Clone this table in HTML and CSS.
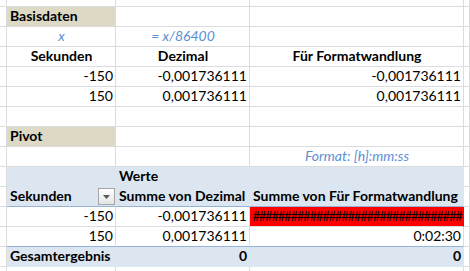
FILE: index.html
```html
<!DOCTYPE html>
<html>
<head>
<meta charset="utf-8">
<link rel="stylesheet" href="styles.css">
</head>
<body>
<div class="sheet">
  <!-- row 0 (partial) -->
  <div class="c"></div><div class="c"></div><div class="c"></div><div class="c"></div><div class="c"></div>
  <!-- Basisdaten -->
  <div class="c"></div><div class="c title">Basisdaten</div><div class="c"></div><div class="c"></div><div class="c"></div>
  <!-- formula row -->
  <div class="c"></div><div class="c note center">x</div><div class="c note center">= x/86400</div><div class="c"></div><div class="c"></div>
  <!-- headers -->
  <div class="c"></div><div class="c b center">Sekunden</div><div class="c b center">Dezimal</div><div class="c b center">Für Formatwandlung</div><div class="c"></div>
  <!-- data -->
  <div class="c"></div><div class="c r">-150</div><div class="c r">-0,001736111</div><div class="c r">-0,001736111</div><div class="c"></div>
  <div class="c"></div><div class="c r">150</div><div class="c r">0,001736111</div><div class="c r">0,001736111</div><div class="c"></div>
  <!-- empty -->
  <div class="c"></div><div class="c"></div><div class="c"></div><div class="c"></div><div class="c"></div>
  <!-- Pivot -->
  <div class="c"></div><div class="c title">Pivot</div><div class="c"></div><div class="c"></div><div class="c"></div>
  <!-- format note -->
  <div class="c"></div><div class="c"></div><div class="c"></div><div class="c note center">Format: [h]:mm:ss</div><div class="c"></div>
  <!-- pivot header 1 -->
  <div class="c"></div><div class="c pv"></div><div class="c pv b">Werte</div><div class="c pv"></div><div class="c"></div>
  <!-- pivot header 2 -->
  <div class="c"></div>
  <div class="c pv pvh b filt"><span>Sekunden</span><span class="dd"><svg width="7" height="4" viewBox="0 0 7 4"><path d="M0 0H7L3.5 4Z" fill="#595959"/></svg></span></div>
  <div class="c pv pvh b">Summe von Dezimal</div>
  <div class="c pv pvh b">Summe von Für Formatwandlung</div>
  <div class="c"></div>
  <!-- pivot rows -->
  <div class="c"></div><div class="c r">-150</div><div class="c r">-0,001736111</div><div class="c red">#################################</div><div class="c"></div>
  <div class="c"></div><div class="c r">150</div><div class="c r">0,001736111</div><div class="c r">0:02:30</div><div class="c"></div>
  <!-- total -->
  <div class="c"></div><div class="c pv pvt b">Gesamtergebnis</div><div class="c pv pvt b r">0</div><div class="c pv pvt b r">0</div><div class="c"></div>
  <!-- partial -->
  <div class="c last"></div><div class="c last"></div><div class="c last"></div><div class="c last"></div><div class="c last"></div>
</div>
</body>
</html>
```

FILE: styles.css
```css
html, body {
  margin: 0;
  padding: 0;
  background: #ffffff;
}
body {
  font-family: Lato, "Open Sans", sans-serif;
  font-size: 14px;
  color: #000000;
  overflow: hidden;
}
.sheet {
  display: grid;
  grid-template-columns: 7px 109px 134px 214px 6px;
  grid-template-rows: 7px repeat(13, 20px) 4px;
  width: 470px;
  height: 271px;
  overflow: hidden;
}
.c {
  box-sizing: border-box;
  border-right: 1px solid #dadcdd;
  border-bottom: 1px solid #dadcdd;
  display: flex;
  align-items: flex-end;
  padding: 0 2px 2px 3px;
  line-height: 16px;
  white-space: nowrap;
  overflow: hidden;
  min-width: 0;
  min-height: 0;
}
.last {
  padding: 0;
  border-bottom: 0;
}
.title {
  background: #ddd9c4;
  font-weight: 700;
}
.b { font-weight: 700; }
.center { justify-content: center; }
.r { justify-content: flex-end; }
.note {
  font-style: italic;
  color: #5b8fd4;
}
.pv {
  background: #dce6f1;
  border-right-color: #dce6f1;
  border-bottom-color: #dce6f1;
}
.pvh {
  border-bottom-color: #95b3d7;
}
.pvt {
  border-top: 1px solid #95b3d7;
  margin-top: -1px;
  height: 21px;
  border-bottom-color: #dce6f1;
}
.filt {
  justify-content: space-between;
  padding-right: 0;
}
.dd {
  box-sizing: border-box;
  width: 17px;
  height: 17px;
  margin-bottom: -1px;
  border: 1px solid #a6a6a6;
  background: linear-gradient(#ffffff, #e4e4e4);
  display: flex;
  align-items: center;
  justify-content: center;
}
.red {
  background: #ff0000;
  border-right-color: #ff0000;
  justify-content: center;
  letter-spacing: -1.2px;
  font-size: 13px;
}
```
